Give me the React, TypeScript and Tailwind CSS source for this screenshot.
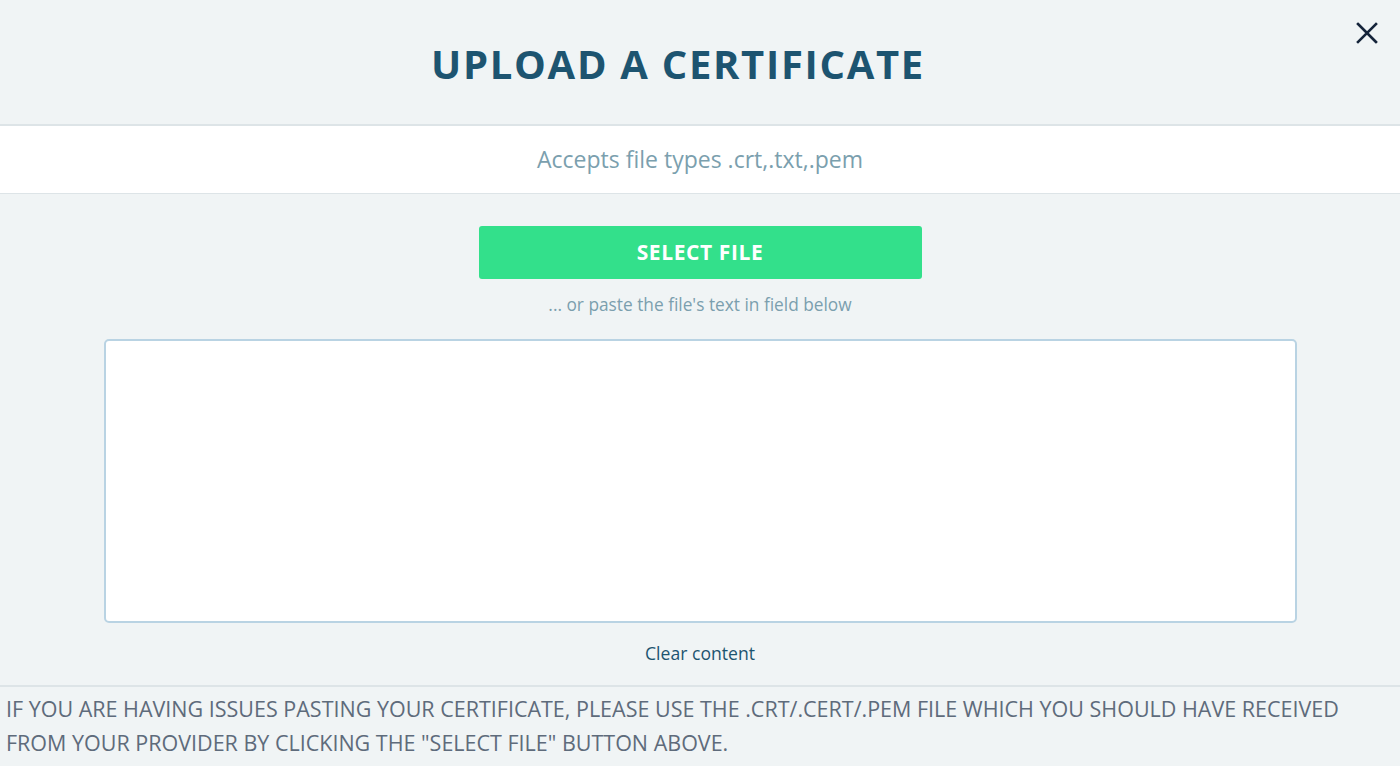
import React, { useState } from "react";

const UploadCertificate = () => {
  const [content, setContent] = useState("");

  return (
    <div
      className="min-h-screen w-full bg-[#f0f4f5] flex flex-col"
      style={{ fontFamily: "'Open Sans', 'Liberation Sans', sans-serif" }}
    >
      {/* Header */}
      <div className="relative h-[126px] flex items-center justify-center border-b-2 border-[#dde4e7] pr-[44px]">
        <h1 className="text-[40px] font-bold tracking-[1.7px] text-[#1d5470] pt-[4px]">
          UPLOAD A CERTIFICATE
        </h1>
        <button className="absolute right-[21px] top-[21px] text-[#15243a]">
          <svg width="24" height="24" viewBox="0 0 24 24" fill="none" stroke="currentColor" strokeWidth="2.6" strokeLinecap="square">
            <path d="M3 3L21 21M21 3L3 21" />
          </svg>
        </button>
      </div>

      {/* Accepted types */}
      <div className="h-[68px] bg-white flex items-center justify-center border-b border-[#dde4e7]">
        <p className="text-[23px] text-[#7b9fae]">Accepts file types .crt,.txt,.pem</p>
      </div>

      {/* Body */}
      <div className="flex flex-col items-center pt-[32px]">
        <button className="w-[443px] h-[53px] bg-[#33e08b] rounded-[3px] text-white text-[21px] font-bold tracking-[0.6px]">
          SELECT FILE
        </button>
        <p className="mt-[13px] text-[17.3px] leading-[26px] text-[#7b9fae]">
          ... or paste the file's text in field below
        </p>
        <textarea
          value={content}
          onChange={(e) => setContent(e.target.value)}
          className="mt-[21px] w-[1193px] h-[284px] bg-white border-2 border-[#b9d3e3] rounded-[5px] resize-none outline-none p-3"
        />
        <button
          onClick={() => setContent("")}
          className="mt-[17px] mb-[19px] text-[17.6px] leading-[26px] text-[#1d5470]"
        >
          Clear content
        </button>
      </div>

      {/* Footer note */}
      <div className="border-t-2 border-[#dde4e7] px-[6px] pt-[5px]">
        <p className="text-[21.5px] leading-[34px] text-[#5e6b7b] uppercase">
          If you are having issues pasting your certificate, please use the .crt/.cert/.pem file which you should have received from your provider by clicking the "select file" button above.
        </p>
      </div>
    </div>
  );
};

export default function App() {
  return <UploadCertificate />;
}
